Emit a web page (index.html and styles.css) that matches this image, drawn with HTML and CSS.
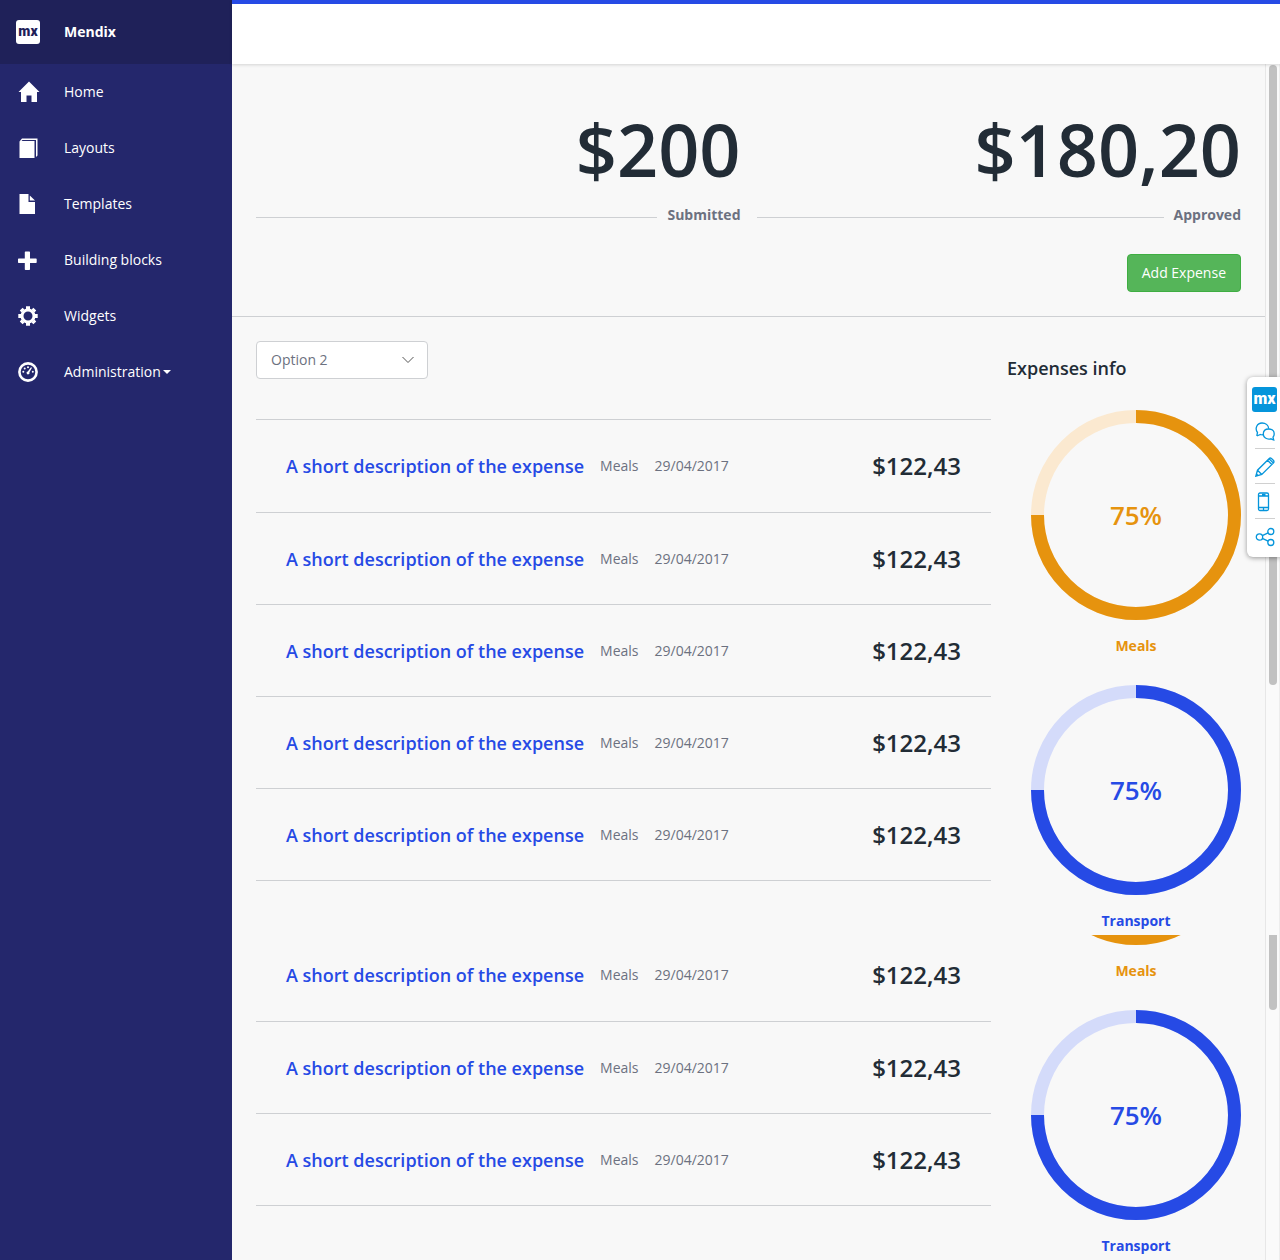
FILE: index.html
```html
<!DOCTYPE html>
<html lang="en">
<head>
<meta charset="utf-8">
<meta name="viewport" content="width=device-width, initial-scale=1">
<title>Expenses</title>
<link rel="stylesheet" href="styles.css">
</head>
<body>
<svg class="defs" aria-hidden="true">
  <symbol id="ring" viewBox="0 0 210 210">
    <circle class="ring-track" cx="105" cy="105" r="98.5"/>
    <path class="ring-value" d="M105 6.5A98.5 98.5 0 1 1 6.5 105"/>
  </symbol>
</svg>
<div class="app">
  <nav class="sidebar">
    <a class="brand" href="#">
      <span class="brand-logo">mx</span>
      <span>Mendix</span>
    </a>
    <ul class="menu">
      <li><a class="menu-link" href="#">
        <svg class="menu-icon" viewBox="0 0 24 24"><path d="M13 1.5L23.500 12H21V22H15.500V15.500H10.500V22H5V12H2.500Z"/></svg>
        <span>Home</span></a></li>
      <li><a class="menu-link" href="#">
        <svg class="menu-icon" viewBox="0 0 24 24"><path d="M3.500 5.500L6 2.500H21.500V19.500L20 21V4H6.500L5.500 5H18.500V22H3.500Z"/></svg>
        <span>Layouts</span></a></li>
      <li><a class="menu-link" href="#">
        <svg class="menu-icon" viewBox="0 0 24 24"><path d="M3.500 2H12.500V10H19V22H3.500ZM13.800 3.500L19 8.600H13.800Z"/></svg>
        <span>Templates</span></a></li>
      <li><a class="menu-link" href="#">
        <svg class="menu-icon" viewBox="0 0 24 24"><path d="M9.500 3.500h3.800a.7.7 0 0 1 .7.7V10.500h6a.7.7 0 0 1 .7.700v3a.7.7 0 0 1-.7.700H14v6.400a.7.7 0 0 1-.7.700H9.500a.7.7 0 0 1-.7-.7V14.900H2.700a.7.7 0 0 1-.7-.7v-3a.7.7 0 0 1 .7-.7H8.800V4.200a.7.7 0 0 1 .7-.7z"/></svg>
        <span>Building blocks</span></a></li>
      <li><a class="menu-link" href="#">
        <svg class="menu-icon" viewBox="0 0 24 24">
          <circle class="gear-body" cx="12" cy="12" r="6"/>
          <g class="gear-teeth"><path d="M12 2.300V5M12 19V21.700M2.300 12H5M19 12H21.700M5.200 5.200L7 7M17 17L18.800 18.800M5.200 18.800L7 17M17 7L18.800 5.200"/></g>
        </svg>
        <span>Widgets</span></a></li>
      <li><a class="menu-link" href="#">
        <svg class="menu-icon" viewBox="0 0 24 24">
          <circle class="dial" cx="12" cy="12" r="8.600"/>
          <circle cx="7.300" cy="11.800" r="1"/><circle cx="8.700" cy="8.600" r="1"/><circle cx="12" cy="7.300" r="1"/><circle cx="16.800" cy="11.800" r="1"/>
          <path d="M15 7.200L16 7.800L13.400 12.200A1.500 1.500 0 1 1 11.800 11.400Z"/>
        </svg>
        <span class="menu-caret">Administration</span></a></li>
    </ul>
  </nav>

  <div class="page">
    <header class="topbar"></header>
    <div class="viewport">
      <main class="content">
        <section class="summary">
          <div class="stats">
            <div class="stat">
              <div class="stat-value">$200</div>
              <div class="stat-label">Submitted</div>
            </div>
            <div class="stat">
              <div class="stat-value">$180,20</div>
              <div class="stat-label">Approved</div>
            </div>
          </div>
          <button class="button" type="button">Add Expense</button>
        </section>

        <section class="panel">
          <div class="panel-main">
            <div class="dropdown">
              <select class="dropdown-field" aria-label="Status">
                <option>Option 1</option>
                <option selected>Option 2</option>
                <option>Option 3</option>
              </select>
              <svg class="dropdown-arrow" viewBox="0 0 12 8"><path d="M0.500 1L6 6.500L11.500 1"/></svg>
            </div>
            <ul class="expenses expenses-start">
              <li class="expense"><a class="expense-name" href="#">A short description of the expense</a><span>Meals</span><span>29/04/2017</span><strong class="expense-amount">$122,43</strong></li>
              <li class="expense"><a class="expense-name" href="#">A short description of the expense</a><span>Meals</span><span>29/04/2017</span><strong class="expense-amount">$122,43</strong></li>
              <li class="expense"><a class="expense-name" href="#">A short description of the expense</a><span>Meals</span><span>29/04/2017</span><strong class="expense-amount">$122,43</strong></li>
              <li class="expense"><a class="expense-name" href="#">A short description of the expense</a><span>Meals</span><span>29/04/2017</span><strong class="expense-amount">$122,43</strong></li>
              <li class="expense"><a class="expense-name" href="#">A short description of the expense</a><span>Meals</span><span>29/04/2017</span><strong class="expense-amount">$122,43</strong></li>
            </ul>
          </div>
          <aside class="info">
            <h2 class="info-title">Expenses info</h2>
            <figure class="chart chart-meals">
              <div class="chart-dial"><svg class="chart-ring"><use href="#ring"/></svg><span class="chart-value">75%</span></div>
              <figcaption class="chart-label">Meals</figcaption>
            </figure>
            <figure class="chart chart-transport">
              <div class="chart-dial"><svg class="chart-ring"><use href="#ring"/></svg><span class="chart-value">75%</span></div>
              <figcaption class="chart-label">Transport</figcaption>
            </figure>
          </aside>
        </section>

        <section class="panel panel-continued">
          <ul class="expenses">
            <li class="expense expense-cut"><a class="expense-name" href="#">A short description of the expense</a><span>Meals</span><span>29/04/2017</span><strong class="expense-amount">$122,43</strong></li>
            <li class="expense"><a class="expense-name" href="#">A short description of the expense</a><span>Meals</span><span>29/04/2017</span><strong class="expense-amount">$122,43</strong></li>
            <li class="expense"><a class="expense-name" href="#">A short description of the expense</a><span>Meals</span><span>29/04/2017</span><strong class="expense-amount">$122,43</strong></li>
          </ul>
          <aside class="info info-continued">
            <figure class="chart chart-meals">
              <svg class="chart-edge" viewBox="0 200 210 10"><circle class="ring-value" cx="105" cy="105" r="98.5"/></svg>
              <figcaption class="chart-label">Meals</figcaption>
            </figure>
            <figure class="chart chart-transport">
              <div class="chart-dial"><svg class="chart-ring"><use href="#ring"/></svg><span class="chart-value">75%</span></div>
              <figcaption class="chart-label">Transport</figcaption>
            </figure>
          </aside>
        </section>
      </main>
      <div class="scrollbar" aria-hidden="true">
        <div class="thumb"></div>
        <div class="thumb thumb-end"></div>
      </div>
    </div>
  </div>
</div>

<div class="toolbox">
  <a class="toolbox-logo" href="#">mx</a>
  <button class="tool" type="button" aria-label="Feedback">
    <svg class="tool-icon" viewBox="0 0 20 20"><path d="M7 1C10.500 1 13.500 3.200 13.700 6.700M1.800 14L2.500 10.500C-.5 6.500 2 1 7 1M1.800 14L5.500 12.500Q7 13 8.200 12.600"/><path d="M13.700 7C17 7 19.200 9 19.200 12Q19.200 13.800 18 15.200L18.700 18L15.800 16.800C11.500 17.800 8.300 15.300 8.300 12C8.300 9 10.500 7 13.700 7Z"/></svg>
  </button>
  <button class="tool" type="button" aria-label="Edit">
    <svg class="tool-icon" viewBox="0 0 20 20"><path d="M.8 19.200L2.500 13.200L14 1.700Q15.200.5 16.500 1.500L18.500 3.500Q19.500 4.800 18.300 6L6.800 17.500ZM2.500 13.200L6.800 17.500M12.500 3.200L16.800 7.500M14 1.700L18.300 6M1.500 17L3 18.500"/></svg>
  </button>
  <button class="tool" type="button" aria-label="Phone view">
    <svg class="tool-icon" viewBox="0 0 20 20"><rect x="3.500" y="1" width="10" height="17.500" rx="1.500"/><path d="M3.500 4H13.500M3.500 15.500H13.500M7 2.500H10.500M8.500 16V18"/></svg>
  </button>
  <button class="tool" type="button" aria-label="Share">
    <svg class="tool-icon" viewBox="0 0 20 20"><circle cx="4.500" cy="10" r="3.200"/><circle cx="15.800" cy="4.500" r="3"/><circle cx="15.800" cy="15.500" r="3"/><path d="M7.300 8.600L13.100 5.800M7.300 11.400L13.100 14.200"/></svg>
  </button>
</div>
</body>
</html>
```
FILE: styles.css
```css
* { box-sizing: border-box; }

body {
  margin: 0;
  background: #f8f8f8;
  color: #6c7180;
  font: 14px/20px "Open Sans", "Noto Sans", sans-serif;
}

ul { margin: 0; padding: 0; list-style: none; }
a { color: inherit; text-decoration: none; }
svg { display: block; }
.defs { width: 0; height: 0; position: absolute; }

.app { display: flex; min-height: 100vh; }

/* Sidebar */
.sidebar { flex: 0 0 232px; background: #24276c; color: #fff; }
.brand, .menu-link {
  display: flex;
  align-items: center;
  gap: 24px;
  padding: 0 16px;
}
.brand { height: 64px; background: #1f2159; font-weight: 700; }
.brand-logo, .toolbox-logo {
  border-radius: 3px;
  font-family: Roboto, sans-serif;
  font-weight: 900;
  text-align: center;
}
.brand-logo {
  width: 24px;
  height: 24px;
  background: #fff;
  color: #1f2159;
  font-size: 14px;
  line-height: 22px;
}
.menu-link { height: 56px; }
.menu-icon { width: 24px; height: 24px; fill: #fff; }
.gear-body { fill: none; stroke: #fff; stroke-width: 3; }
.gear-teeth { stroke: #fff; stroke-width: 4; }
.dial { fill: none; stroke: #fff; stroke-width: 2.600; }
.menu-caret { display: flex; align-items: center; gap: 2px; }
.menu-caret::after {
  content: "";
  border: 4px solid transparent;
  border-top-color: #fff;
  border-bottom: 0;
}

/* Page frame */
.page { flex: 1; min-width: 0; display: flex; flex-direction: column; }
.topbar {
  position: relative;
  height: 64px;
  border-top: 4px solid #264ae5;
  background: #fff;
  box-shadow: 0 1px 3px rgba(0, 0, 0, 0.15);
}
.viewport { flex: 1; display: flex; }
.content { flex: 1; min-width: 0; }
.scrollbar {
  flex: 0 0 15px;
  display: flex;
  flex-direction: column;
  gap: 250px;
  padding: 1px 2px 0 3px;
  border-left: 1px solid #e7e7e7;
  border-right: 1px solid #ededed;
  background: #fafafa;
}
.thumb { width: 8px; height: 620px; border-radius: 4px; background: #c1c1c1; }
.thumb-end { height: 75px; border-radius: 0 0 4px 4px; }

/* Totals */
.summary {
  display: flex;
  flex-direction: column;
  align-items: flex-end;
  gap: 29px;
  padding: 36px 24px 24px;
  border-bottom: 1px solid #ced0d3;
}
.stats {
  align-self: stretch;
  display: grid;
  grid-template-columns: 1fr 1fr;
  gap: 16px;
}
.stat { text-align: right; }
.stat-value {
  padding-bottom: 7px;
  color: #222c36;
  font-size: 72px;
  font-weight: 600;
  line-height: 98px;
}
.stat-label { display: flex; align-items: center; gap: 10px; font-weight: 700; }
.stat-label::before {
  content: "";
  flex: 1;
  margin-top: 4px;
  border-top: 1px solid #ced0d3;
}
.button {
  height: 38px;
  padding: 0 14px;
  border: 1px solid #3fae42;
  border-radius: 4px;
  background: #55b559;
  color: #fff;
  font: inherit;
}

/* Expense panels */
.panel {
  display: grid;
  grid-template-columns: minmax(0, 1fr) 234px;
  gap: 16px;
  padding: 24px 24px 4px;
}
.panel-continued { padding-top: 0; }
.dropdown { display: grid; align-items: center; width: 172px; }
.dropdown-field, .dropdown-arrow { grid-area: 1 / 1; }
.dropdown-field {
  appearance: none;
  width: 100%;
  height: 38px;
  padding: 0 14px;
  border: 1px solid #ced0d3;
  border-radius: 4px;
  background: #fff;
  color: #6c7180;
  font: inherit;
}
.dropdown-arrow {
  justify-self: end;
  width: 12px;
  height: 8px;
  margin-right: 14px;
  fill: none;
  stroke: #555;
  pointer-events: none;
}
.expenses-start { margin-top: 40px; border-top: 1px solid #ced0d3; }
.expense {
  display: flex;
  align-items: center;
  gap: 16px;
  height: 92px;
  padding: 0 30px;
  border-bottom: 1px solid #ced0d3;
}
.expenses-start .expense:first-child { height: 93px; }
.expense-cut { height: 87px; padding-bottom: 6px; }
.expense-name { color: #264ae5; font-size: 18px; font-weight: 600; }
.expense-amount {
  margin-left: auto;
  color: #222c36;
  font-size: 24px;
  font-weight: 600;
}

/* Charts */
.info { display: flex; flex-direction: column; gap: 29px; padding-top: 16px; }
.info-continued { padding-top: 0; }
.info-title {
  margin: 0;
  padding-bottom: 2px;
  color: #222c36;
  font-size: 18px;
  font-weight: 600;
  line-height: 22px;
}
.chart {
  display: flex;
  flex-direction: column;
  gap: 16px;
  width: 210px;
  margin: 0 0 0 auto;
  text-align: center;
}
.chart-meals { --tone: #e6930e; --tint: #fbe9d0; }
.chart-transport { --tone: #264ae5; --tint: #d4dbfa; }
.chart-dial { display: grid; place-items: center; }
.chart-ring, .chart-value { grid-area: 1 / 1; }
.chart-ring { width: 210px; height: 210px; }
.chart-edge { width: 210px; height: 10px; }
.ring-track { fill: none; stroke: var(--tint); stroke-width: 13; }
.ring-value { fill: none; stroke: var(--tone); stroke-width: 13; }
.chart-value { color: var(--tone); font-size: 26px; font-weight: 600; line-height: 32px; }
.chart-label { color: var(--tone); font-weight: 700; }

/* Floating tools over the right edge */
.toolbox {
  position: absolute;
  top: 377px;
  right: 0;
  width: 33px;
  padding: 10px 3px 3px 5px;
  border-radius: 6px 0 0 6px;
  background: #fff;
  box-shadow: 0 1px 5px rgba(0, 0, 0, 0.4);
}
.toolbox-logo {
  display: block;
  height: 25px;
  margin-bottom: 2px;
  background: #0595db;
  color: #fff;
  font-size: 16px;
  line-height: 24px;
}
.tool {
  display: grid;
  place-items: center;
  width: 20px;
  height: 35px;
  margin-left: 3px;
  padding: 2px 0 0;
  border: 0;
  border-bottom: 1px solid #d0d0d0;
  background: none;
}
.tool:last-child { padding-top: 0; border-bottom: 0; }
.tool-icon { width: 20px; height: 20px; fill: none; stroke: #0595db; stroke-width: 1.300; }
```
